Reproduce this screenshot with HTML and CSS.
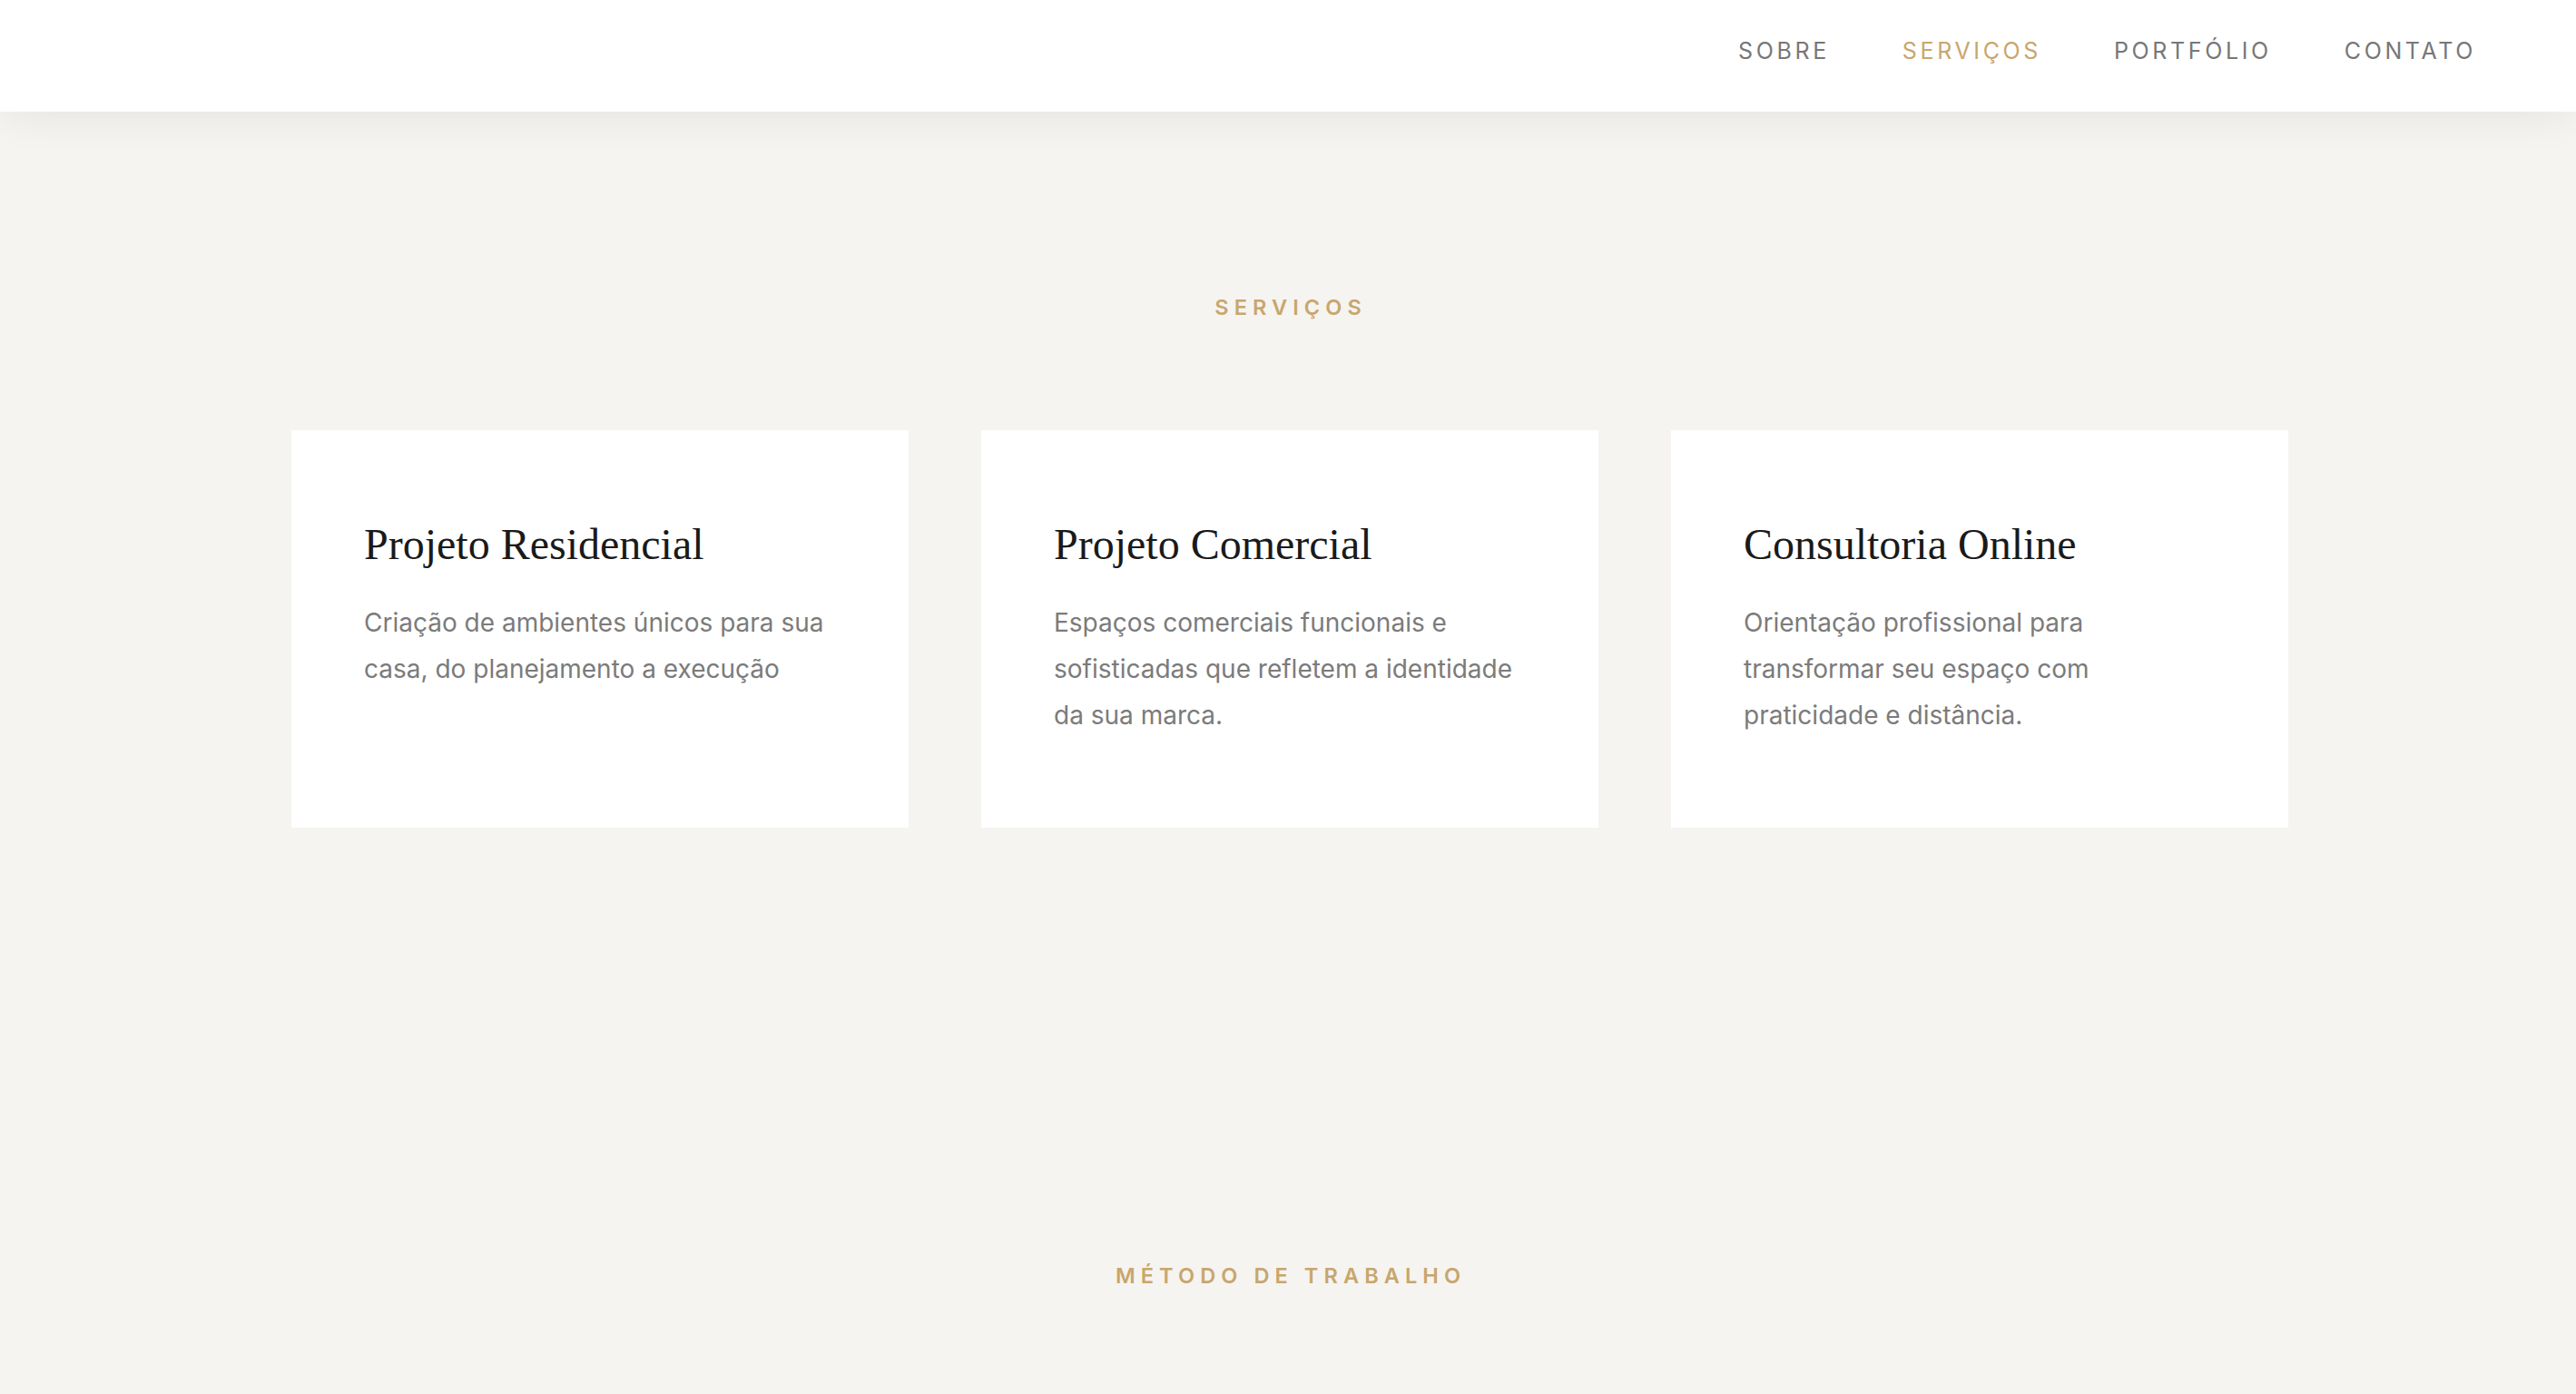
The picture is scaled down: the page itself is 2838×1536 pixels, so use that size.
FILE: index.html
```html
<!DOCTYPE html>
<html lang="pt-BR">
<head>
<meta charset="utf-8">
<title>Serviços</title>
<link rel="stylesheet" href="styles.css">
</head>
<body>
<header class="site-header">
  <nav class="nav">
    <a class="nav-link" href="#sobre">SOBRE</a>
    <a class="nav-link is-active" href="#servicos">SERVIÇOS</a>
    <a class="nav-link" href="#portfolio">PORTFÓLIO</a>
    <a class="nav-link" href="#contato">CONTATO</a>
  </nav>
</header>
<main>
  <section class="section services" id="servicos">
    <h2 class="section-label">SERVIÇOS</h2>
    <div class="cards">
      <article class="card">
        <h3 class="card-title">Projeto Residencial</h3>
        <p class="card-text">Criação de ambientes únicos para sua casa, do planejamento a execução</p>
      </article>
      <article class="card">
        <h3 class="card-title">Projeto Comercial</h3>
        <p class="card-text">Espaços comerciais funcionais e sofisticadas que refletem a identidade da sua marca.</p>
      </article>
      <article class="card">
        <h3 class="card-title">Consultoria Online</h3>
        <p class="card-text">Orientação profissional para transformar seu espaço com praticidade e distância.</p>
      </article>
    </div>
  </section>
  <section class="section method" id="metodo">
    <h2 class="section-label">MÉTODO DE TRABALHO</h2>
  </section>
</main>
</body>
</html>
```

FILE: styles.css
```css
* {
  box-sizing: border-box;
}

html, body {
  margin: 0;
  padding: 0;
}

body {
  background: #f5f4f0;
  font-family: Inter, "Noto Sans", "Liberation Sans", sans-serif;
  color: #1a1a1a;
  min-height: 1536px;
}

.site-header {
  position: relative;
  z-index: 2;
  height: 123px;
  background: #ffffff;
  box-shadow: 0 4px 48px rgba(0, 0, 0, 0.07);
  display: flex;
  justify-content: flex-end;
  align-items: center;
  padding: 0 110px 12px 0;
}

.nav {
  display: flex;
  align-items: center;
  gap: 80px;
}

.nav-link {
  font-size: 25px;
  font-weight: 400;
  letter-spacing: 0.145em;
  color: #777777;
  text-decoration: none;
  line-height: 30px;
}

.nav-link.is-active {
  color: #c8a66d;
}

.section {
  display: flex;
  flex-direction: column;
  align-items: center;
}

.services {
  padding-top: 202px;
}

.section-label {
  margin: 0;
  font-size: 23.5px;
  font-weight: 600;
  letter-spacing: 0.26em;
  line-height: 28px;
  color: #c8a66d;
  padding-left: 0.26em;
}

.cards {
  margin-top: 121px;
  margin-left: 4px;
  display: grid;
  grid-template-columns: repeat(3, 680px);
  gap: 80px;
}

.card {
  background: #ffffff;
  padding: 98px 80px 99px;
}

.card-title {
  margin: 0 0 33px;
  font-family: "Liberation Serif", "DejaVu Serif", serif;
  font-weight: 400;
  font-size: 48px;
  line-height: 56px;
  color: #1a1a1a;
}

.card-text {
  margin: 0;
  font-size: 28px;
  line-height: 50.75px;
  color: #7b7b7b;
}

.method {
  padding-top: 480px;
}
```
